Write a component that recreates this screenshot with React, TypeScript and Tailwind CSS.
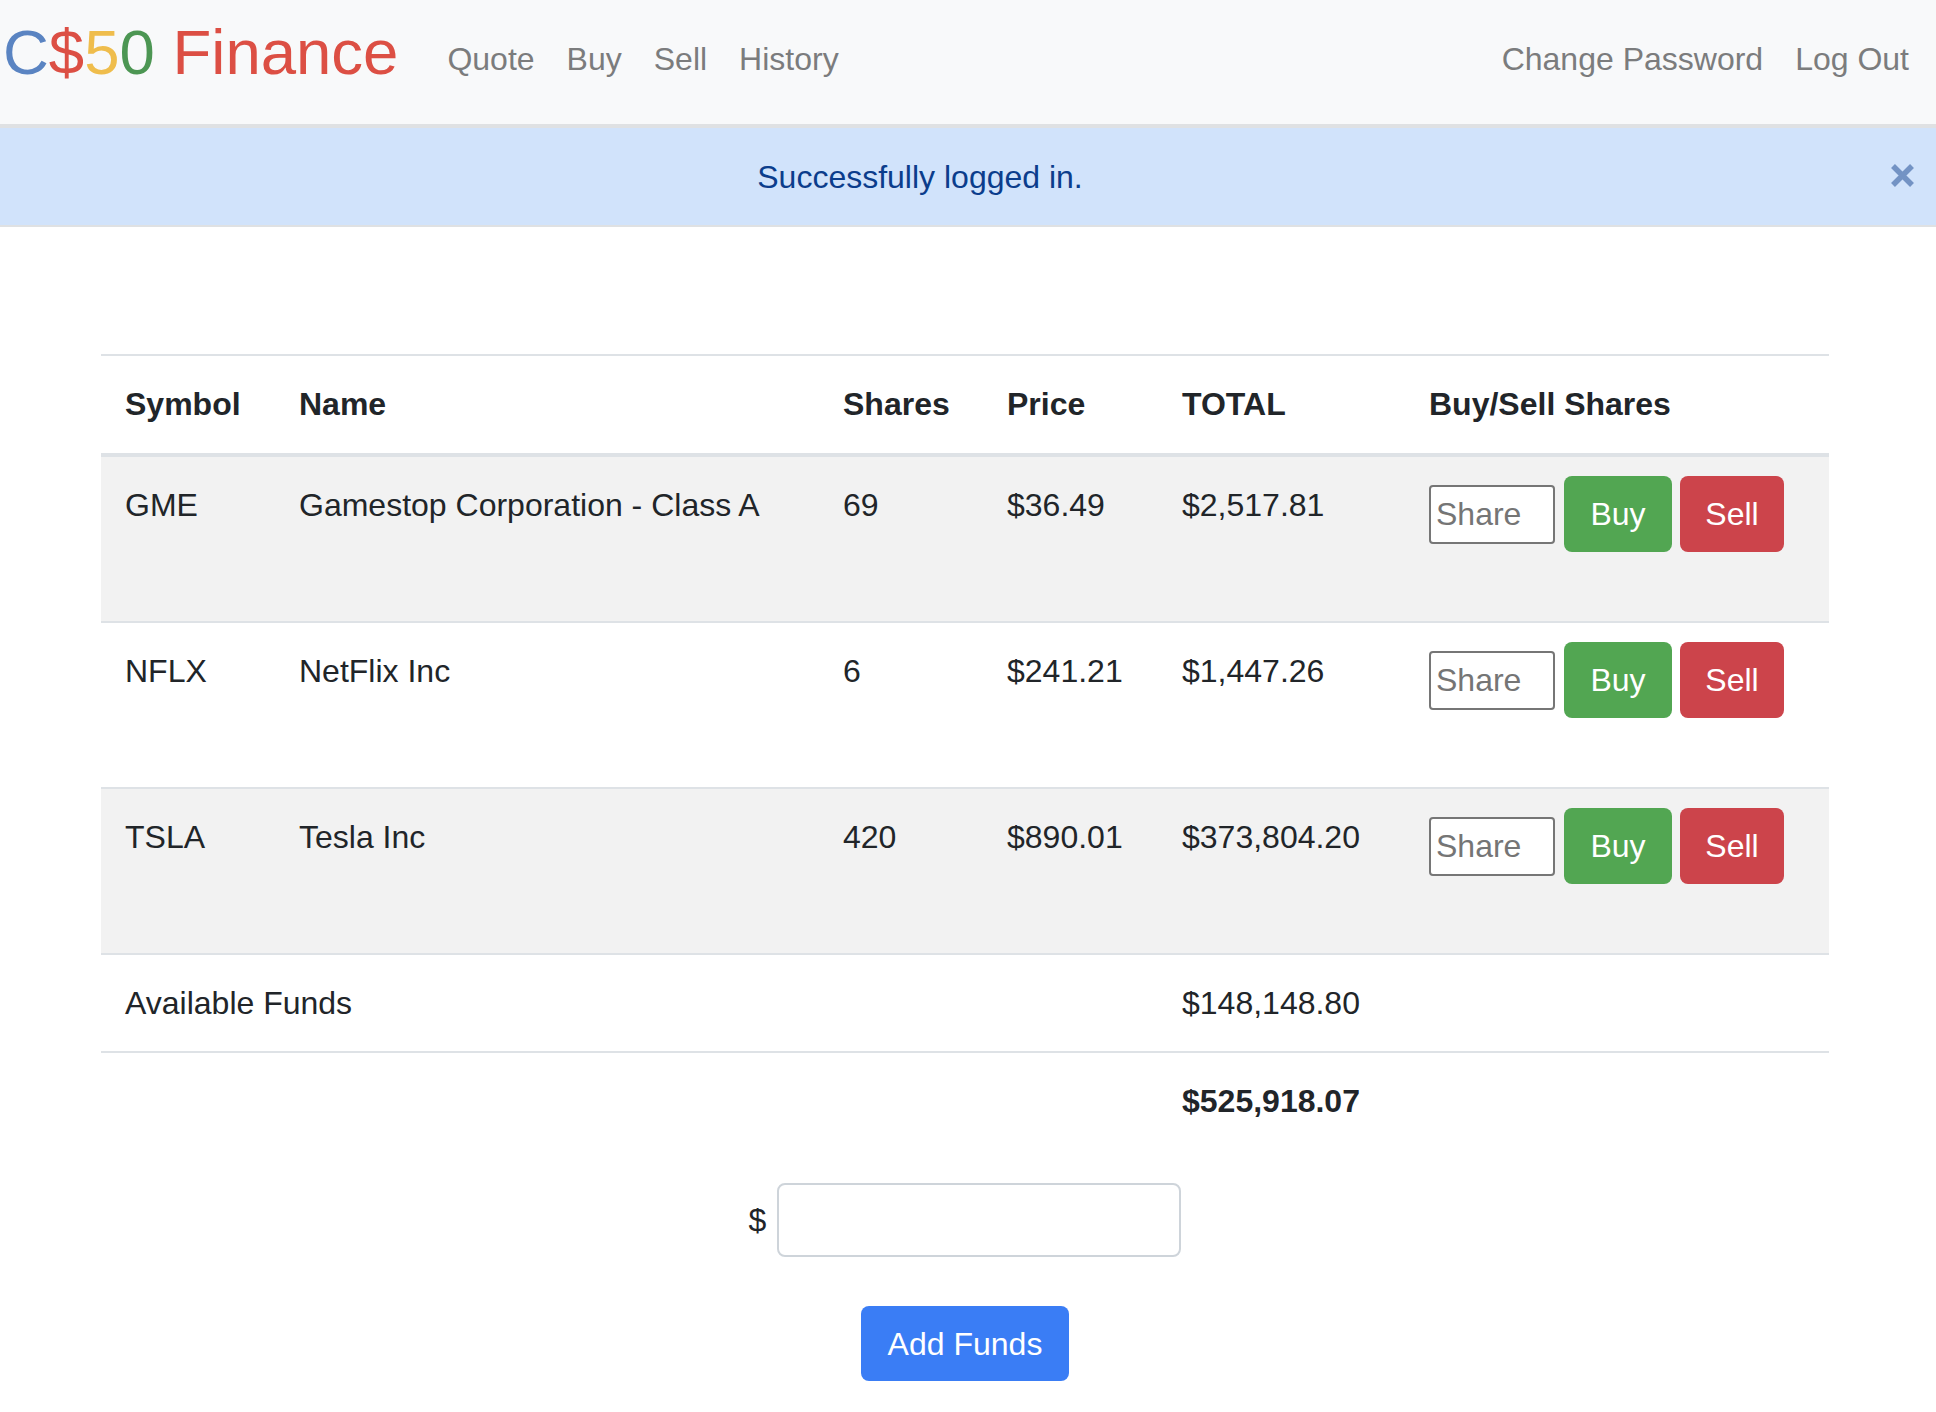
import { useState } from "react";

const holdings = [
  { symbol: "GME", name: "Gamestop Corporation - Class A", shares: "69", price: "$36.49", total: "$2,517.81" },
  { symbol: "NFLX", name: "NetFlix Inc", shares: "6", price: "$241.21", total: "$1,447.26" },
  { symbol: "TSLA", name: "Tesla Inc", shares: "420", price: "$890.01", total: "$373,804.20" },
];

const cols = "grid grid-cols-[174px_544px_164px_175px_247px_424px]";

function NavLink({ label }: { label: string }) {
  return (
    <a href="#" className="px-[16px] text-[#7b7c7d] leading-[48px]">
      {label}
    </a>
  );
}

export default function App() {
  const [showAlert, setShowAlert] = useState(true);

  return (
    <div className="min-h-screen bg-white text-[#212529] text-[32px] font-['Liberation_Sans',Arial,sans-serif]">
      {/* navbar */}
      <nav className="flex items-center h-[128px] bg-[#f8f9fa] border-b-4 border-[#dfe1e3] pl-[3px] pr-[11px]">
        <a href="#" className="text-[63.5px] leading-none mr-[33px] mb-[18px]">
          <span className="text-[#5a84c2]">C</span>
          <span className="text-[#dc4f44]">$</span>
          <span className="text-[#efbd4c]">5</span>
          <span className="text-[#4c9653]">0</span>{" "}
          <span className="text-[#dc4f44]">Finance</span>
        </a>
        <div className="flex mb-[7px]">
          <NavLink label="Quote" />
          <NavLink label="Buy" />
          <NavLink label="Sell" />
          <NavLink label="History" />
        </div>
        <div className="flex ml-auto mb-[7px]">
          <NavLink label="Change Password" />
          <NavLink label="Log Out" />
        </div>
      </nav>

      {showAlert && (
        <div className="relative flex items-center justify-center h-[99px] bg-[#d1e3fb] border-b-2 border-[#dfe1e3] pr-[96px] text-[#0b3d8c]">
          Successfully logged in.
          <button
            onClick={() => setShowAlert(false)}
            className="absolute right-[21px] top-[35px] w-[25px] h-[25px]"
            aria-label="Close"
          >
            <svg viewBox="0 0 25 25" className="w-[25px] h-[25px]">
              <path d="M3 3 L22 22 M22 3 L3 22" stroke="#7393c4" strokeWidth="5.5" strokeLinecap="butt" />
            </svg>
          </button>
        </div>
      )}

      <main className="ml-[101px] w-[1728px] mt-[127px] pb-[32px]">
        {/* header */}
        <div className={`${cols} h-[103px] border-t-2 border-b-4 border-[#dee2e6] font-bold`}>
          {["Symbol", "Name", "Shares", "Price", "TOTAL", "Buy/Sell Shares"].map((h) => (
            <div key={h} className="px-[24px] pt-[24px] leading-[48px]">
              {h}
            </div>
          ))}
        </div>

        {holdings.map((row, i) => (
          <div
            key={row.symbol}
            className={`${cols} h-[166px] border-b-2 border-[#dee2e6] ${i % 2 === 0 ? "bg-[#f2f2f2]" : "bg-white"}`}
          >
            <div className="px-[24px] pt-[24px] leading-[48px]">{row.symbol}</div>
            <div className="px-[24px] pt-[24px] leading-[48px]">{row.name}</div>
            <div className="px-[24px] pt-[24px] leading-[48px]">{row.shares}</div>
            <div className="px-[24px] pt-[24px] leading-[48px]">{row.price}</div>
            <div className="px-[24px] pt-[24px] leading-[48px]">{row.total}</div>
            <div className="px-[24px] pt-[19px]">
              <div className="flex items-center">
                <input
                  placeholder="Share"
                  className="w-[126px] h-[59px] bg-white border-2 border-[#767676] rounded-[4px] pl-[5px] text-[32px] placeholder:text-[#757575] outline-none"
                />
                <button className="ml-[9px] w-[108px] h-[76px] rounded-[8px] bg-[#52a652] text-white leading-[48px]">
                  Buy
                </button>
                <button className="ml-[8px] w-[104px] h-[76px] rounded-[8px] bg-[#cc444b] text-white leading-[48px]">
                  Sell
                </button>
              </div>
            </div>
          </div>
        ))}

        <div className={`${cols} h-[98px] border-b-2 border-[#dee2e6]`}>
          <div className="col-span-4 px-[24px] pt-[24px] leading-[48px]">Available Funds</div>
          <div className="px-[24px] pt-[24px] leading-[48px]">$148,148.80</div>
        </div>
        <div className={`${cols} h-[96px]`}>
          <div className="col-span-4" />
          <div className="px-[24px] pt-[24px] leading-[48px] font-bold">$525,918.07</div>
        </div>

        <div className="flex justify-center items-center gap-[11px] mt-[34px]">
          <span className="leading-[48px]">$</span>
          <input className="w-[404px] h-[74px] border-2 border-[#ced4da] rounded-[8px] px-[24px] text-[32px] outline-none" />
        </div>

        <div className="flex justify-center mt-[49px]">
          <button className="w-[208px] h-[75px] rounded-[8px] bg-[#3a7df5] text-white leading-[48px]">
            Add Funds
          </button>
        </div>
      </main>
    </div>
  );
}
